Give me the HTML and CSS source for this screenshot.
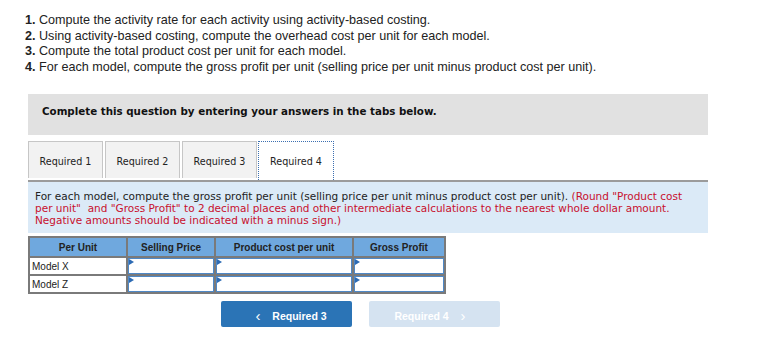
FILE: index.html
```html
<!DOCTYPE html>
<html lang="en">
<head>
  <meta charset="UTF-8">
  <title>Required 4</title>
  <link rel="stylesheet" href="styles.css">
</head>
<body>
  <ol class="steps">
    <li><b>1.</b> Compute the activity rate for each activity using activity-based costing.</li>
    <li><b>2.</b> Using activity-based costing, compute the overhead cost per unit for each model.</li>
    <li><b>3.</b> Compute the total product cost per unit for each model.</li>
    <li><b>4.</b> For each model, compute the gross profit per unit (selling price per unit minus product cost per unit).</li>
  </ol>

  <div class="wrap">
    <div class="banner">Complete this question by entering your answers in the tabs below.</div>

    <div class="tabs">
      <div class="tab">Required 1</div>
      <div class="tab">Required 2</div>
      <div class="tab">Required 3</div>
      <div class="tab active">Required 4</div>
    </div>

    <div class="prompt">
      <p class="lead">For each model, compute the gross profit per unit (selling price per unit minus product cost per unit). <span class="red">(Round "Product cost per unit"&nbsp; and "Gross Profit" to 2 decimal places and other intermediate calculations to the nearest whole dollar amount.<br>Negative amounts should be indicated with a minus sign.)</span></p>
    </div>

    <table class="grid">
      <tr>
        <th class="c1">Per Unit</th>
        <th class="c2">Selling Price</th>
        <th class="c3">Product cost per unit</th>
        <th class="c4">Gross Profit</th>
      </tr>
      <tr>
        <td class="label">Model X</td>
        <td><div class="cell"></div></td>
        <td><div class="cell"></div></td>
        <td><div class="cell"></div></td>
      </tr>
      <tr>
        <td class="label">Model Z</td>
        <td><div class="cell"></div></td>
        <td><div class="cell"></div></td>
        <td><div class="cell"></div></td>
      </tr>
    </table>

    <div class="nav">
      <button class="btn prev"><span class="chev">&lsaquo;</span> Required 3</button>
      <button class="btn next">Required 4 <span class="chev">&rsaquo;</span></button>
    </div>
  </div>
</body>
</html>
```

FILE: styles.css
```css
body { margin: 0; background: #fff; color: #222; }

.steps { list-style: none; margin: 0; padding: 13px 0 0 25px; font-family: "Liberation Sans", Arial, sans-serif; font-size: 12.6px; line-height: 15.5px; color: #222; }
.steps b { font-weight: bold; }

.wrap { margin: 0 0 0 28px; width: 680px; padding-top: 19px; }

.banner { background: #e1e1e1; height: 41px; box-sizing: border-box; padding: 10px 0 0 14px; font-family: "DejaVu Sans", Verdana, sans-serif; font-weight: bold; font-size: 10.3px; line-height: 14px; color: #111; }

.tabs { display: flex; gap: 2px; margin-top: 6px; position: relative; z-index: 1; }
.tab { width: 75px; height: 37px; box-sizing: border-box; border: 1px solid #c6c6c6; border-bottom: none; background: #f2f2f2; font-family: "DejaVu Sans", Verdana, sans-serif; font-size: 9.6px; line-height: 39px; text-align: center; color: #222; }
.tab.active { width: 76px; height: 39px; margin-left: -1px; background: #fff; border: 1px dotted #3b6fb0; border-bottom: none; }

.prompt { background: #dbeaf7; border-top: 2px solid #9b9b9b; padding: 8px 8px 7px 7px; font-family: "DejaVu Sans", Verdana, sans-serif; font-size: 10.5px; line-height: 12px; color: #222; }
.lead { margin: 0; }
.red { color: #c8102e; }

.grid { border-collapse: collapse; margin-top: 3px; width: 418px; font-family: "Liberation Sans", Arial, sans-serif; font-size: 10px; }
.grid th { background: #6fa8de; border: 2px solid #7a7a7a; height: 18px; padding: 0; font-weight: bold; color: #222; }
.grid td { border: 2px solid #7a7a7a; height: 16px; padding: 0; }
.grid .c1 { width: 96px; }
.grid .c2 { width: 86px; }
.grid .c3 { width: 136px; }
.grid .c4 { width: 90px; }
.grid td.label { padding-left: 2px; color: #222; }
.cell { position: relative; height: 14px; border: 1px solid #4f88c6; }
.cell::before { content: ""; position: absolute; left: 0; top: 0; border-left: 5px solid #2d6bb4; border-top: 3px solid transparent; border-bottom: 3px solid transparent; }

.nav { display: flex; gap: 17px; margin: 7px 0 0 193px; }
.btn { width: 131px; height: 26px; border: none; border-radius: 2px; font-family: "Liberation Sans", Arial, sans-serif; font-weight: bold; font-size: 10.5px; color: #fff; padding: 0; }
.btn.prev { background: #2b74b6; }
.btn.next { background: #d5e3f1; }
.chev { font-size: 15px; font-weight: normal; margin: 0 9px; position: relative; top: 1px; }
```
